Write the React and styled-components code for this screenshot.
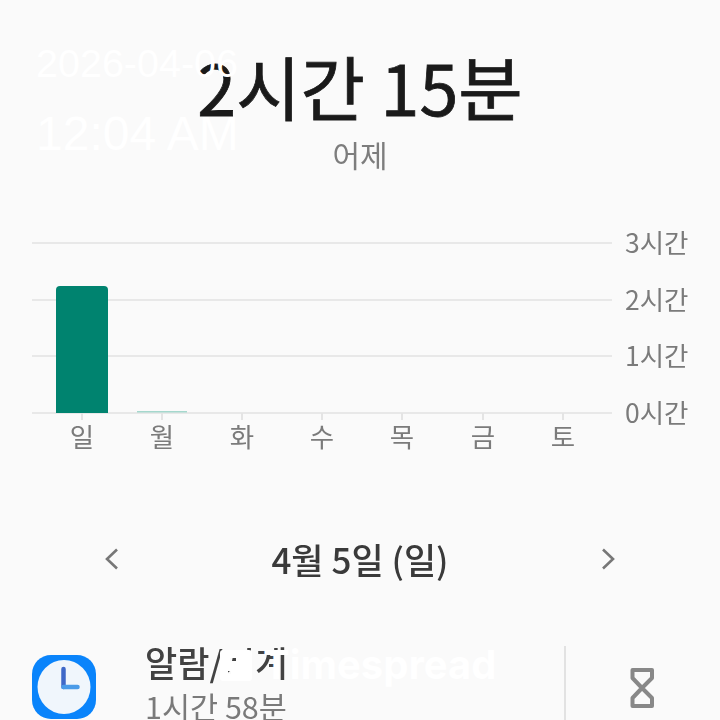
import React from "react";
import styled, { createGlobalStyle } from "styled-components";

const Global = createGlobalStyle`
  html, body { margin: 0; padding: 0; background: #fafafa; }
  body { font-family: "Noto Sans CJK KR", "Noto Sans", sans-serif; }
`;

const Screen = styled.div`
  position: relative;
  width: 720px;
  height: 720px;
  overflow: hidden;
  background: #fafafa;
`;

const Content = styled.main`
  display: flex;
  flex-direction: column;
  align-items: stretch;
  padding-top: 40px;
  filter: blur(0.75px);
`;

const Summary = styled.header`
  display: flex;
  flex-direction: column;
  align-items: center;
`;

const Total = styled.h1`
  margin: 0;
  font-size: 70px;
  line-height: 92px;
  font-weight: 400;
  color: #1a1a1a;
  -webkit-text-stroke: 0.8px #1a1a1a;
`;

const Period = styled.div`
  font-size: 30px;
  line-height: 44px;
  color: #7d7d7d;
`;

const ChartBox = styled.section`
  margin-top: 44px;
  height: 236px;
`;

const ChartSvg = styled.svg`
  display: block;
`;

const DayNav = styled.nav`
  display: flex;
  align-items: center;
  justify-content: space-between;
  margin-top: 78px;
  padding: 0 100px;
  height: 50px;
`;

const NavDate = styled.div`
  font-size: 35px;
  line-height: 50px;
  font-weight: 500;
  color: #3a3a3a;
`;

const AppRow = styled.section`
  display: flex;
  align-items: flex-start;
  margin-top: 56px;
  padding-left: 32px;
`;

const AppIcon = styled.svg`
  flex: none;
  margin-top: 15px;
`;

const AppText = styled.div`
  flex: 1;
  margin-left: 49px;
  display: flex;
  flex-direction: column;
`;

const AppName = styled.div`
  font-size: 35px;
  line-height: 44px;
  font-weight: 500;
  color: #424242;
`;

const AppTime = styled.div`
  font-size: 30.500px;
  line-height: 44px;
  color: #7a7a7a;
`;

const TimerCell = styled.div`
  flex: none;
  width: 156px;
  height: 80px;
  margin-top: 6px;
  border-left: 2px solid #e2e2e2;
  display: flex;
  justify-content: center;
  box-sizing: border-box;
`;

const TimerIcon = styled.svg`
  margin-top: 21px;
  margin-right: 2px;
`;

const Stamp = styled.div`
  position: absolute;
  color: #fff;
  font-family: ${(p) => p.$family || '"Liberation Sans", Arial, sans-serif'};
  white-space: nowrap;
  left: ${(p) => p.$x}px;
  top: ${(p) => p.$y}px;
  font-size: ${(p) => p.$size}px;
  font-weight: ${(p) => p.$weight || 400};
  line-height: 1;
`;

const LogoMark = styled.svg`
  position: absolute;
  left: 220px;
  top: 650px;
`;

const gridLines = [
  { y: 23, label: "3시간" },
  { y: 80, label: "2시간" },
  { y: 136, label: "1시간" },
  { y: 193, label: "0시간" },
];

const days = [
  { label: "일", x: 82 },
  { label: "월", x: 162 },
  { label: "화", x: 242 },
  { label: "수", x: 322 },
  { label: "목", x: 402 },
  { label: "금", x: 483 },
  { label: "토", x: 563 },
];

function Chart() {
  return (
    <ChartSvg width="720" height="236" viewBox="0 0 720 236" fontFamily='"Noto Sans CJK KR", sans-serif'>
      {gridLines.map((l) => (
        <g key={l.y}>
          <line x1="32" x2="612" y1={l.y} y2={l.y} stroke="#e8e8e8" strokeWidth="2" />
          <text x="625" y={l.y + 10} fontSize="26.500" fill="#7b7b7b">{l.label}</text>
        </g>
      ))}
      {days.map((d) => (
        <g key={d.label}>
          <line x1={d.x} x2={d.x} y1="193" y2="200" stroke="#e4e4e4" strokeWidth="2" />
          <text x={d.x} y="227" fontSize="26.500" fill="#7b7b7b" textAnchor="middle">{d.label}</text>
        </g>
      ))}
      <path d="M56 193V70a4 4 0 0 1 4-4h44a4 4 0 0 1 4 4V193Z" fill="#00836f" />
      <rect x="137" y="191" width="50" height="1.5" fill="#a5d8cd" />
    </ChartSvg>
  );
}

export default function App() {
  return (
    <Screen>
      <Global />
      <Content>
        <Summary>
          <Total>2시간 15분</Total>
          <Period>어제</Period>
        </Summary>
        <ChartBox>
          <Chart />
        </ChartBox>
        <DayNav>
          <svg width="24" height="28" viewBox="0 0 24 28" fill="none">
            <path d="M17 4.5 7 14l10 9.500" stroke="#777" strokeWidth="2.600" />
          </svg>
          <NavDate>4월 5일 (일)</NavDate>
          <svg width="24" height="28" viewBox="0 0 24 28" fill="none">
            <path d="m7 4.500 10 9.500-10 9.500" stroke="#777" strokeWidth="2.600" />
          </svg>
        </DayNav>
        <AppRow>
          <AppIcon width="64" height="64" viewBox="0 0 64 64">
            <rect width="64" height="64" rx="19" fill="#0a84fb" />
            <ellipse cx="32" cy="32" rx="26.500" ry="27" fill="#f0f6fc" />
            <path d="M31.500 32V14" stroke="#3f68c8" strokeWidth="4.500" strokeLinecap="round" fill="none" />
            <path d="M31.500 32h14" stroke="#4a9be8" strokeWidth="4.500" strokeLinecap="round" fill="none" />
          </AppIcon>
          <AppText>
            <AppName>알람/시계</AppName>
            <AppTime>1시간 58분</AppTime>
          </AppText>
          <TimerCell>
            <TimerIcon width="28" height="42" viewBox="0 0 28 42" fill="none">
              <path d="M4.500 3H24V11L14 21 24 31V39H4.500V31L14 21 4.500 11Z" stroke="#888" strokeWidth="4" strokeLinejoin="round" />
            </TimerIcon>
          </TimerCell>
        </AppRow>
      </Content>
      <Stamp $x={36} $y={44} $size={39.500}>2026-04-06</Stamp>
      <Stamp $x={36} $y={110} $size={48}>12:04 AM</Stamp>
      <LogoMark width="32" height="31" viewBox="0 0 32 31">
        <path fillRule="evenodd" fill="#fff" d="M3 0H29a3 3 0 0 1 3 3V28a3 3 0 0 1-3 3H3a3 3 0 0 1-3-3V3a3 3 0 0 1 3-3ZM10 8v3h6V8ZM8 21v3h3v-3Z" />
      </LogoMark>
      <Stamp $x={263} $y={645} $size={40} $weight={700} $family='Inter, "Liberation Sans", sans-serif'>Timespread</Stamp>
    </Screen>
  );
}
